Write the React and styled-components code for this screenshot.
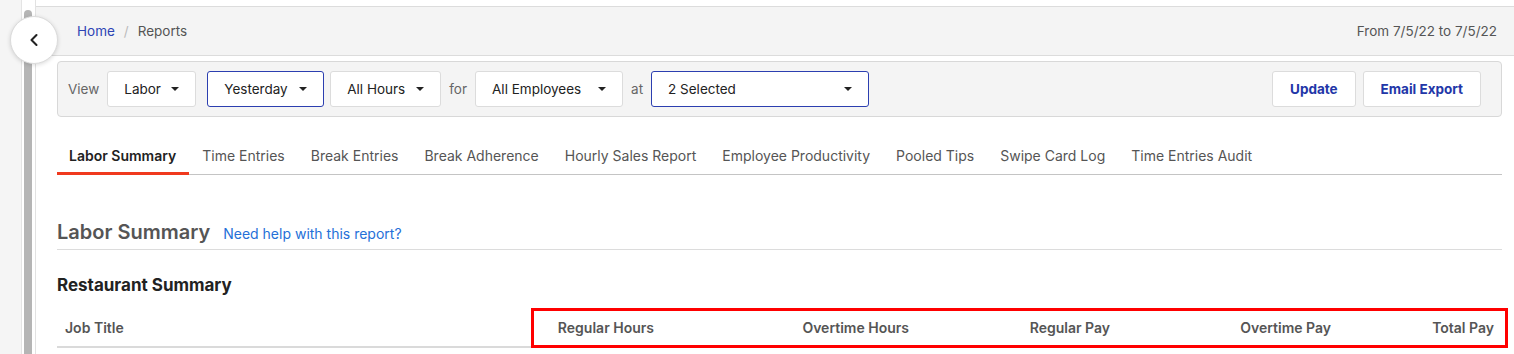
import React from "react";
import styled, { createGlobalStyle } from "styled-components";
import { ChevronLeft } from "lucide-react";

const filters = [
  { type: "label", text: "View" },
  { type: "select", text: "Labor", width: 89 },
  { type: "select", text: "Yesterday", width: 117, active: true },
  { type: "select", text: "All Hours", width: 111 },
  { type: "label", text: "for" },
  { type: "select", text: "All Employees", width: 148 },
  { type: "label", text: "at" },
  { type: "select", text: "2 Selected", width: 218, active: true },
];

const tabs = [
  "Labor Summary",
  "Time Entries",
  "Break Entries",
  "Break Adherence",
  "Hourly Sales Report",
  "Employee Productivity",
  "Pooled Tips",
  "Swipe Card Log",
  "Time Entries Audit",
];

const columns = ["Regular Hours", "Overtime Hours", "Regular Pay", "Overtime Pay", "Total Pay"];

function App() {
  return (
    <Page>
      <GlobalStyle />
      <Rail>
        <RailPanel />
        <RailTrack>
          <Thumb />
        </RailTrack>
      </Rail>
      <BackButton>
        <ChevronLeft size={20} strokeWidth={2.5} color="#222" />
      </BackButton>
      <Main>
        <Header>
          <Breadcrumb>
            <Crumb href="#">Home</Crumb>
            <Slash>/</Slash>
            <span>Reports</span>
          </Breadcrumb>
          <DateRange>From 7/5/22 to 7/5/22</DateRange>
        </Header>
        <Content>
          <FilterBar>
            <FilterGroup>
              {filters.map((f, i) =>
                f.type === "label" ? (
                  <FilterLabel key={i}>{f.text}</FilterLabel>
                ) : (
                  <Select key={i} $active={f.active} $width={f.width}>
                    <span>{f.text}</span>
                    <Caret />
                  </Select>
                )
              )}
            </FilterGroup>
            <Actions>
              <ActionButton>Update</ActionButton>
              <ActionButton>Email Export</ActionButton>
            </Actions>
          </FilterBar>

          <TabList>
            {tabs.map((t, i) => (
              <Tab key={t} $active={i === 0}>{t}</Tab>
            ))}
          </TabList>

          <TitleRow>
            <Title>Labor Summary</Title>
            <HelpLink href="#">Need help with this report?</HelpLink>
          </TitleRow>

          <SectionTitle>Restaurant Summary</SectionTitle>

          <TableHead>
            <HeadCell>Job Title</HeadCell>
            {columns.map((c) => (
              <HeadCell key={c} $right>{c}</HeadCell>
            ))}
            <Highlight />
          </TableHead>
        </Content>
      </Main>
    </Page>
  );
}

const GlobalStyle = createGlobalStyle`
  html, body {
    margin: 0;
    padding: 0;
    background: #fff;
    overflow: hidden;
  }
  body {
    font-family: Inter, "Liberation Sans", sans-serif;
    font-size: 14px;
    color: #333;
  }
  * {
    box-sizing: border-box;
  }
`;

const Page = styled.div`
  position: relative;
  display: flex;
  width: 1514px;
  height: 354px;
  overflow: hidden;
`;

const Rail = styled.div`
  display: flex;
  flex: 0 0 35px;
  border-right: 1px solid #e2e2e2;
`;

const RailPanel = styled.div`
  width: 22px;
  background: #f5f5f5;
  border-right: 1px solid #e4e4e4;
`;

const RailTrack = styled.div`
  flex: 1;
  padding: 10px 3px 0 2px;
`;

const Thumb = styled.div`
  width: 8px;
  height: 100%;
  background: #b5b5b5;
  border-radius: 4px 4px 0 0;
`;

const BackButton = styled.button`
  position: absolute;
  left: 10px;
  top: 16px;
  width: 48px;
  height: 48px;
  border-radius: 50%;
  background: #fff;
  border: 1px solid #dcdcdc;
  box-shadow: 0 1px 4px rgba(0, 0, 0, 0.15);
  display: flex;
  align-items: center;
  justify-content: center;
  padding: 0;
  z-index: 2;
`;

const Main = styled.div`
  flex: 1;
  padding-top: 6px;
`;

const Header = styled.div`
  display: flex;
  align-items: center;
  justify-content: space-between;
  height: 50px;
  padding: 0 17px 0 41px;
  background: #f4f4f4;
  border-top: 1px solid #dcdcdc;
  border-bottom: 1px solid #dcdcdc;
  color: #555;
  font-size: 13.5px;
`;

const Breadcrumb = styled.div`
  display: flex;
  align-items: center;
  gap: 9px;
`;

const Crumb = styled.a`
  color: #2d44b5;
  text-decoration: none;
`;

const Slash = styled.span`
  color: #bbb;
`;

const DateRange = styled.span`
  color: #555;
`;

const Content = styled.div`
  padding: 5px 12px 0 21px;
`;

const FilterBar = styled.div`
  display: flex;
  align-items: center;
  justify-content: space-between;
  height: 56px;
  padding: 0 20px 0 10px;
  background: #f4f4f4;
  border: 1px solid #d8d8d8;
  border-radius: 4px;
  font-size: 13.5px;
  white-space: nowrap;
`;

const FilterGroup = styled.div`
  display: flex;
  align-items: center;
  gap: 8px;
`;

const FilterLabel = styled.span`
  color: #666;
`;

const Select = styled.div`
  display: flex;
  flex-shrink: 0;
  align-items: center;
  justify-content: space-between;
  gap: 10px;
  height: 36px;
  width: ${(p) => p.$width}px;
  padding: 0 16px 0 16px;
  background: #fff;
  border: 1px solid ${(p) => (p.$active ? "#2c3fb0" : "#dcdcdc")};
  border-radius: 3px;
  color: #222;
  &:nth-child(3) {
    margin: 0 -2px 0 3px;
  }
`;

const Caret = styled.span`
  flex-shrink: 0;
  width: 0;
  height: 0;
  border-left: 4px solid transparent;
  border-right: 4px solid transparent;
  border-top: 4px solid #222;
`;

const Actions = styled.div`
  display: flex;
  gap: 7px;
`;

const ActionButton = styled.button`
  height: 36px;
  padding: 0 17px;
  background: #fff;
  border: 1px solid #dcdcdc;
  border-radius: 3px;
  font-family: inherit;
  font-size: 13.5px;
  font-weight: 700;
  color: #2236a8;
`;

const TabList = styled.div`
  display: flex;
  margin-top: 20px;
  border-bottom: 1px solid #c4c4c4;
`;

const Tab = styled.div`
  padding: 10px 13px 7px 12px;
  margin-right: 1px;
  margin-bottom: -1px;
  line-height: 18px;
  border-bottom: 3px solid ${(p) => (p.$active ? "#f0391e" : "transparent")};
  color: ${(p) => (p.$active ? "#222" : "#555")};
  font-weight: ${(p) => (p.$active ? 600 : 400)};
`;

const TitleRow = styled.div`
  display: flex;
  align-items: baseline;
  gap: 13px;
  margin-top: 43px;
  padding-bottom: 3px;
  border-bottom: 1px solid #dcdcdc;
`;

const Title = styled.h2`
  margin: 0;
  font-size: 20px;
  line-height: 28px;
  font-weight: 600;
  color: #555;
`;

const HelpLink = styled.a`
  color: #2570d8;
  text-decoration: none;
`;

const SectionTitle = styled.h3`
  margin: 24px 0 0;
  font-size: 17px;
  line-height: 22px;
  font-weight: 700;
  color: #222;
`;

const TableHead = styled.div`
  position: relative;
  display: grid;
  grid-template-columns: 474px 131px 255px 201px 221px 1fr;
  padding: 22px 0 8px;
  border-bottom: 2px solid #dadada;
`;

const HeadCell = styled.div`
  padding: 0 8px;
  line-height: 20px;
  font-weight: 600;
  color: #555;
  text-align: ${(p) => (p.$right ? "right" : "left")};
`;

const Highlight = styled.div`
  position: absolute;
  left: 474px;
  top: 12px;
  width: 977px;
  height: 40px;
  border: 3px solid #f00;
  pointer-events: none;
`;

export default App;
